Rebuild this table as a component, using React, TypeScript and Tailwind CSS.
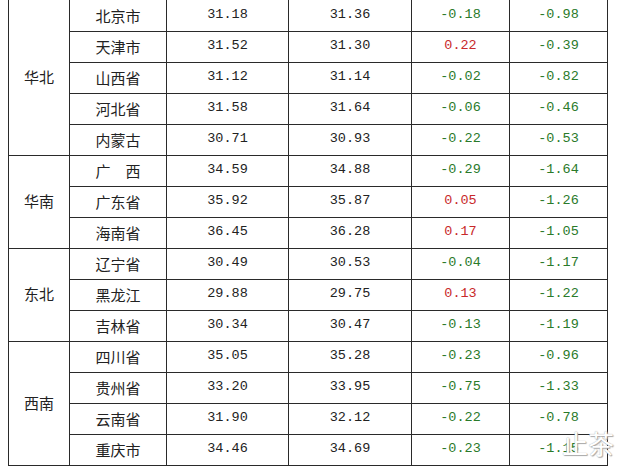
const groups = [
  {
    region: "华北",
    rows: [
      ["北京市", "31.18", "31.36", "-0.18", "-0.98"],
      ["天津市", "31.52", "31.30", "0.22", "-0.39"],
      ["山西省", "31.12", "31.14", "-0.02", "-0.82"],
      ["河北省", "31.58", "31.64", "-0.06", "-0.46"],
      ["内蒙古", "30.71", "30.93", "-0.22", "-0.53"],
    ],
  },
  {
    region: "华南",
    rows: [
      ["广　西", "34.59", "34.88", "-0.29", "-1.64"],
      ["广东省", "35.92", "35.87", "0.05", "-1.26"],
      ["海南省", "36.45", "36.28", "0.17", "-1.05"],
    ],
  },
  {
    region: "东北",
    rows: [
      ["辽宁省", "30.49", "30.53", "-0.04", "-1.17"],
      ["黑龙江", "29.88", "29.75", "0.13", "-1.22"],
      ["吉林省", "30.34", "30.47", "-0.13", "-1.19"],
    ],
  },
  {
    region: "西南",
    rows: [
      ["四川省", "35.05", "35.28", "-0.23", "-0.96"],
      ["贵州省", "33.20", "33.95", "-0.75", "-1.33"],
      ["云南省", "31.90", "32.12", "-0.22", "-0.78"],
      ["重庆市", "34.46", "34.69", "-0.23", "-1.15"],
    ],
  },
];

const cjk = "[font-family:'Noto_Sans_CJK_SC',sans-serif]";
const num = "[font-family:'Liberation_Mono',monospace] text-[13.5px]";

function change(v: string) {
  return v.startsWith("-") ? "text-[#2a7a2a]" : "text-[#c8282a]";
}

export default function App() {
  let first = true;
  return (
    <div className="relative w-[626px] h-[476px] bg-white overflow-hidden">
      <table className="ml-[8px] border-collapse text-[#222] text-center">
        <colgroup>
          <col className="w-[61px]" />
          <col className="w-[97px]" />
          <col className="w-[122px]" />
          <col className="w-[123px]" />
          <col className="w-[98px]" />
          <col className="w-[98px]" />
        </colgroup>
        <tbody>
          {groups.map((g) =>
            g.rows.map((r, i) => {
              const top = first ? "border-t-0" : "";
              first = false;
              return (
                <tr key={r[0]} className="h-[31px]">
                  {i === 0 && (
                    <td
                      rowSpan={g.rows.length}
                      className={`border border-[#2a2a2a] p-0 text-[15px] ${cjk} ${top}`}
                    >
                      {g.region}
                    </td>
                  )}
                  <td className={`border border-[#2a2a2a] p-0 text-[15px] leading-none ${cjk} ${top}`}>{r[0]}</td>
                  <td className={`border border-[#2a2a2a] p-0 ${num} ${top}`}>{r[1]}</td>
                  <td className={`border border-[#2a2a2a] p-0 ${num} ${top}`}>{r[2]}</td>
                  <td className={`border border-[#2a2a2a] p-0 ${num} ${change(r[3])} ${top}`}>{r[3]}</td>
                  <td className={`border border-[#2a2a2a] p-0 ${num} ${change(r[4])} ${top}`}>{r[4]}</td>
                </tr>
              );
            })
          )}
        </tbody>
      </table>
      <div
        className={`absolute left-[562px] top-[430px] text-[26px] leading-none text-white ${cjk} [text-shadow:0_0_1px_#999,1px_1px_1px_#aaa]`}
      >
        止茶
      </div>
    </div>
  );
}
